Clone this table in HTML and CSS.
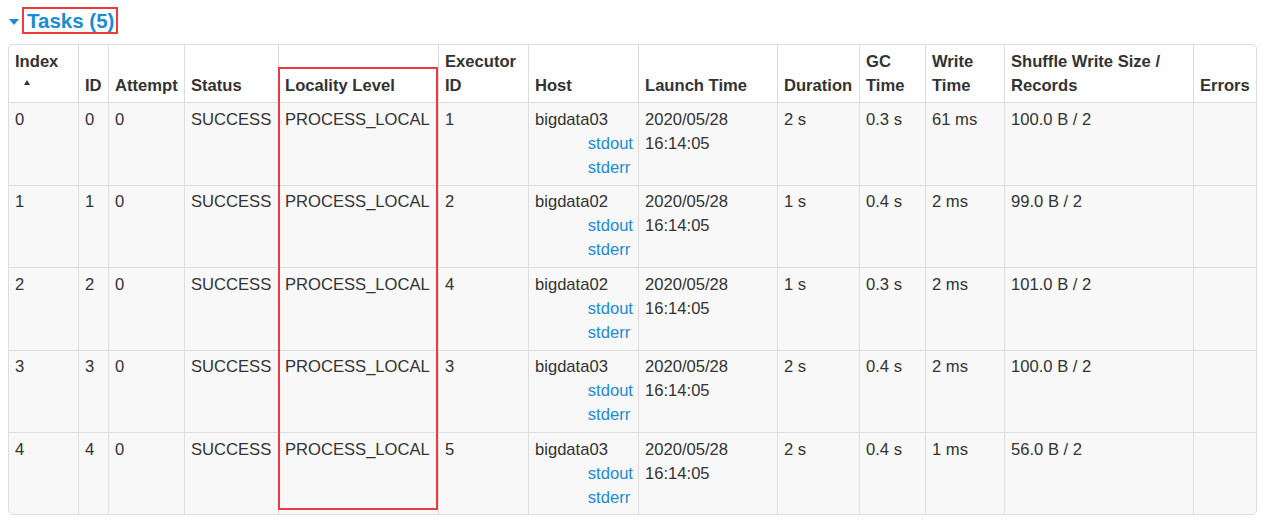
FILE: index.html
```html
<!DOCTYPE html>
<html>
<head>
<meta charset="utf-8">
<link rel="stylesheet" href="styles.css">
</head>
<body>
<div class="page">
  <div class="title-row">
    <span class="caret"></span>
    <span class="title">Tasks (5)</span>
  </div>
  <div class="table-wrap">
    <table class="tasks">
      <colgroup>
        <col class="c-index"><col class="c-id"><col class="c-attempt"><col class="c-status"><col class="c-locality"><col class="c-exec"><col class="c-host"><col class="c-launch"><col class="c-duration"><col class="c-gc"><col class="c-write"><col class="c-shuffle"><col class="c-errors">
      </colgroup>
      <thead>
        <tr>
          <th>Index<div class="sort"><span class="arrow"></span></div></th>
          <th>ID</th>
          <th>Attempt</th>
          <th>Status</th>
          <th>Locality Level</th>
          <th>Executor<br>ID</th>
          <th>Host</th>
          <th>Launch Time</th>
          <th>Duration</th>
          <th>GC<br>Time</th>
          <th>Write<br>Time</th>
          <th>Shuffle Write Size /<br>Records</th>
          <th>Errors</th>
        </tr>
      </thead>
      <tbody>
        <tr>
          <td>0</td><td>0</td><td>0</td><td>SUCCESS</td><td>PROCESS_LOCAL</td><td>1</td>
          <td><div>bigdata03</div><div class="logs"><a href="#">stdout</a><a href="#">stderr</a></div></td>
          <td>2020/05/28<br>16:14:05</td><td>2 s</td><td>0.3 s</td><td>61 ms</td><td>100.0 B / 2</td><td></td>
        </tr>
        <tr>
          <td>1</td><td>1</td><td>0</td><td>SUCCESS</td><td>PROCESS_LOCAL</td><td>2</td>
          <td><div>bigdata02</div><div class="logs"><a href="#">stdout</a><a href="#">stderr</a></div></td>
          <td>2020/05/28<br>16:14:05</td><td>1 s</td><td>0.4 s</td><td>2 ms</td><td>99.0 B / 2</td><td></td>
        </tr>
        <tr>
          <td>2</td><td>2</td><td>0</td><td>SUCCESS</td><td>PROCESS_LOCAL</td><td>4</td>
          <td><div>bigdata02</div><div class="logs"><a href="#">stdout</a><a href="#">stderr</a></div></td>
          <td>2020/05/28<br>16:14:05</td><td>1 s</td><td>0.3 s</td><td>2 ms</td><td>101.0 B / 2</td><td></td>
        </tr>
        <tr>
          <td>3</td><td>3</td><td>0</td><td>SUCCESS</td><td>PROCESS_LOCAL</td><td>3</td>
          <td><div>bigdata03</div><div class="logs"><a href="#">stdout</a><a href="#">stderr</a></div></td>
          <td>2020/05/28<br>16:14:05</td><td>2 s</td><td>0.4 s</td><td>2 ms</td><td>100.0 B / 2</td><td></td>
        </tr>
        <tr>
          <td>4</td><td>4</td><td>0</td><td>SUCCESS</td><td>PROCESS_LOCAL</td><td>5</td>
          <td><div>bigdata03</div><div class="logs"><a href="#">stdout</a><a href="#">stderr</a></div></td>
          <td>2020/05/28<br>16:14:05</td><td>2 s</td><td>0.4 s</td><td>1 ms</td><td>56.0 B / 2</td><td></td>
        </tr>
      </tbody>
    </table>
    <div class="highlight"></div>
  </div>
</div>
</body>
</html>
```

FILE: styles.css
```css
html, body {
  margin: 0;
  padding: 0;
  background: #ffffff;
}

body {
  font-family: "Liberation Sans", Arial, sans-serif;
  color: #333333;
  font-size: 16.6px;
  line-height: 24px;
}

.page {
  padding: 7px 10px 0 8px;
}

.title-row {
  display: flex;
  align-items: center;
  height: 27px;
  margin-bottom: 10px;
}

.caret {
  width: 0;
  height: 0;
  margin-left: 1px;
  margin-right: 3px;
  margin-top: 2px;
  border-left: 5.5px solid transparent;
  border-right: 5.5px solid transparent;
  border-top: 6px solid #1a8bd6;
}

.title {
  box-sizing: border-box;
  height: 27px;
  padding: 0 2px 0 3px;
  border: 2px solid #ec3b40;
  color: #1a8bd6;
  font-weight: bold;
  font-size: 20.5px;
  line-height: 24px;
  white-space: nowrap;
}

.table-wrap {
  position: relative;
  width: 1248px;
}

.tasks {
  table-layout: fixed;
  width: 1248px;
  border-collapse: separate;
  border-spacing: 0;
  border: 1px solid #dddddd;
  border-left: 0;
  border-radius: 5px;
}

.c-index { width: 70px; }
.c-id { width: 30px; }
.c-attempt { width: 76px; }
.c-status { width: 94px; }
.c-locality { width: 160px; }
.c-exec { width: 90px; }
.c-host { width: 110px; }
.c-launch { width: 139px; }
.c-duration { width: 82px; }
.c-gc { width: 66px; }
.c-write { width: 79px; }
.c-shuffle { width: 189px; }
.c-errors { width: 63px; }

.tasks th,
.tasks td {
  border-left: 1px solid #dddddd;
  padding: 4.7px 5px 4.7px 6px;
  text-align: left;
  white-space: nowrap;
  overflow: hidden;
}

.tasks th {
  vertical-align: bottom;
  font-weight: bold;
  background: #ffffff;
}

.tasks td {
  vertical-align: top;
  border-top: 1px solid #dddddd;
  background: #f8f8f8;
}

.tasks thead th:first-child {
  border-top-left-radius: 5px;
}

.tasks thead th:last-child {
  border-top-right-radius: 5px;
}

.tasks tbody tr:last-child td:first-child {
  border-bottom-left-radius: 5px;
}

.tasks tbody tr:last-child td:last-child {
  border-bottom-right-radius: 5px;
}

.sort {
  box-sizing: border-box;
  height: 24px;
  padding-top: 6px;
  padding-left: 9px;
}

.arrow {
  display: block;
  width: 0;
  height: 0;
  border-left: 3.5px solid transparent;
  border-right: 3.5px solid transparent;
  border-bottom: 5px solid #333333;
}

.logs {
  width: fit-content;
  margin-left: auto;
}

.logs a {
  display: block;
  color: #1a8bd6;
  text-decoration: none;
}

.highlight {
  position: absolute;
  left: 270px;
  top: 23px;
  width: 160px;
  height: 443px;
  box-sizing: border-box;
  border: 2px solid #ec3b40;
  pointer-events: none;
}
```
